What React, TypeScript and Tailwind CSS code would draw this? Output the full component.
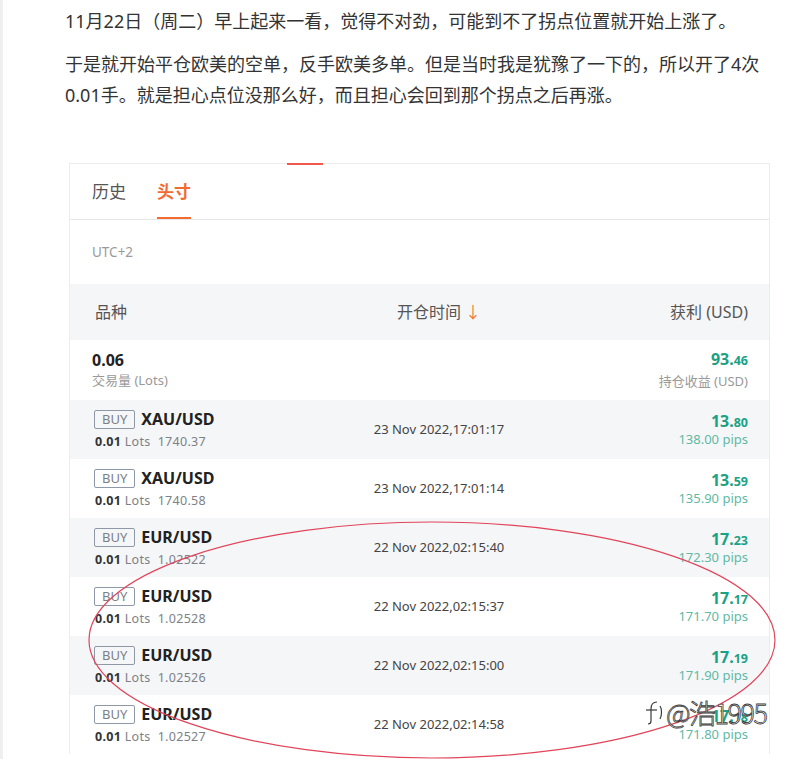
import React from 'react';

const CJK = "font-['Noto_Sans','Noto_Sans_CJK_SC',sans-serif]";

type Position = {
  pair: string;
  price: string;
  time: string;
  whole: string;
  cents: string;
  pips: string;
};

const POSITIONS: Position[] = [
  { pair: 'XAU/USD', price: '1740.37', time: '23 Nov 2022,17:01:17', whole: '13.', cents: '80', pips: '138.00' },
  { pair: 'XAU/USD', price: '1740.58', time: '23 Nov 2022,17:01:14', whole: '13.', cents: '59', pips: '135.90' },
  { pair: 'EUR/USD', price: '1.02522', time: '22 Nov 2022,02:15:40', whole: '17.', cents: '23', pips: '172.30' },
  { pair: 'EUR/USD', price: '1.02528', time: '22 Nov 2022,02:15:37', whole: '17.', cents: '17', pips: '171.70' },
  { pair: 'EUR/USD', price: '1.02526', time: '22 Nov 2022,02:15:00', whole: '17.', cents: '19', pips: '171.90' },
  { pair: 'EUR/USD', price: '1.02527', time: '22 Nov 2022,02:14:58', whole: '17.', cents: '18', pips: '171.80' },
];

function PositionRow({ p, shaded }: { p: Position; shaded: boolean }) {
  return (
    <div className={`flex h-[59px] items-center pl-[23px] pr-[21px] ${shaded ? 'bg-[#f5f6f8]' : 'bg-white'}`}>
      <div className="w-[246px] pl-[1px]">
        <div className="flex items-center gap-[6px]">
          <span className="flex h-[19px] items-center rounded-[2px] border border-[#8e98a6] px-[7px] text-[13px] leading-none text-[#7a7f86]">
            BUY
          </span>
          <span className="text-[16px] font-bold leading-none text-[#222]">{p.pair}</span>
        </div>
        <div className="mt-[5px] pl-[1px] text-[12.5px] leading-[16px] tracking-[0.3px]">
          <span className="font-bold text-[#333]">0.01</span>
          <span className="text-[#7d8187]"> Lots&nbsp; {p.price}</span>
        </div>
      </div>
      <div className="w-[200px] text-center text-[13px] text-[#444]">{p.time}</div>
      <div className="flex-1 text-right">
        <div className="font-bold leading-[17px] text-[#1ba184]">
          <span className="text-[16px]">{p.whole}</span>
          <span className="text-[12.5px]">{p.cents}</span>
        </div>
        <div className="text-[13px] leading-[16px] text-[#5fb9a4]">{p.pips} pips</div>
      </div>
    </div>
  );
}

function Watermark() {
  return (
    <div className="pointer-events-none absolute left-[642px] top-[698px] flex items-center gap-[2px] whitespace-nowrap font-['Noto_Sans_CJK_SC',sans-serif] text-[27px] font-light leading-none tracking-[-1.5px] text-white [-webkit-text-stroke:0.8px_#3a3a3a]">
      <svg width="22" height="28" viewBox="0 0 22 28" fill="none" stroke="#3a3a3a" strokeWidth="1.2">
        <path d="M15 4c-4 0-6 3-6 7v12c0 2-1 3-3 3" />
        <path d="M4 12h11" />
        <path d="M18 8c2 3 2 9 0 13" />
      </svg>
      <span>@浩1995</span>
    </div>
  );
}

export default function App() {
  return (
    <div className={`relative flex min-h-[759px] overflow-hidden bg-white ${CJK}`}>
      <div className="w-[3px] shrink-0 bg-[#efefef]" />
      <div className="flex-1 pl-[62px]">
        <div className="w-[705px] pt-[6px] text-[18px] leading-[31px] text-[#333]">
          <p>11月22日（周二）早上起来一看，觉得不对劲，可能到不了拐点位置就开始上涨了。</p>
          <p className="mt-[12px]">
            于是就开始平仓欧美的空单，反手欧美多单。但是当时我是犹豫了一下的，所以开了4次0.01手。就是担心点位没那么好，而且担心会回到那个拐点之后再涨。
          </p>
        </div>

        <div className="relative ml-[4px] mt-[52px] w-[701px] border border-[#ececec] border-b-0">
          <div className="absolute left-[217px] top-[-1px] h-[2px] w-[36px] bg-[#ef5a4c]" />

          {/* tabs */}
          <div className="flex h-[56px] items-stretch gap-[31px] border-b border-[#e8e8e8] px-[22px] text-[17px]">
            <span className="flex items-center text-[#555]">历史</span>
            <span className="flex items-center border-b-2 border-[#f26b30] pt-[2px] font-bold text-[#f26b30]">头寸</span>
          </div>

          <div className="flex h-[64px] items-center px-[22px] text-[13.5px] text-[#9a9a9a]">UTC+2</div>

          {/* header */}
          <div className="flex h-[56px] items-center bg-[#f5f6f8] pl-[23px] pr-[21px] text-[16px] text-[#555]">
            <div className="w-[246px] pl-[2px]">品种</div>
            <div className="w-[200px] text-center">
              开仓时间 <span className="text-[#f07a3a]">↓</span>
            </div>
            <div className="flex-1 text-right">获利 (USD)</div>
          </div>

          {/* summary */}
          <div className="flex h-[60px] items-center pl-[22px] pr-[21px]">
            <div className="flex-1">
              <div className="text-[16px] font-bold leading-[20px] text-[#222]">0.06</div>
              <div className="text-[13px] leading-[20px] text-[#999]">交易量 (Lots)</div>
            </div>
            <div className="text-right">
              <div className="font-bold leading-[20px] text-[#1ba184]">
                <span className="text-[16px]">93.</span>
                <span className="text-[12.5px]">46</span>
              </div>
              <div className="text-[13px] leading-[20px] text-[#999]">持仓收益 (USD)</div>
            </div>
          </div>

          {POSITIONS.map((p, i) => (
            <PositionRow key={i} p={p} shaded={i % 2 === 0} />
          ))}
        </div>
      </div>

      {/* hand-drawn circle over the EUR/USD rows */}
      <svg className="pointer-events-none absolute left-0 top-0" width="787" height="759" viewBox="0 0 787 759">
        <ellipse cx="432" cy="640" rx="343" ry="118" fill="none" stroke="#e0455a" strokeWidth="1.2" />
      </svg>

      <Watermark />
    </div>
  );
}
